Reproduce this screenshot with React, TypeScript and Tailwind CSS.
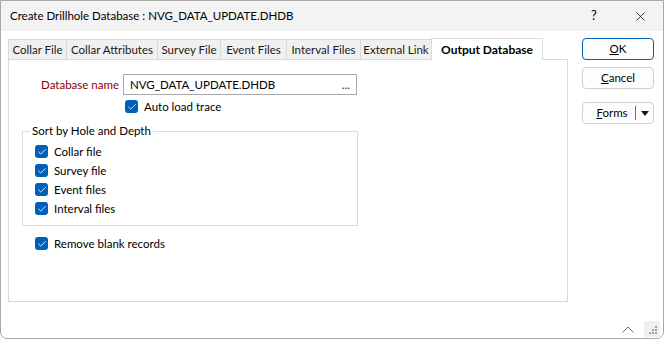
import { Check, X } from 'lucide-react'

const TABS = [
  { label: 'Collar File', w: 'w-[58px]' },
  { label: 'Collar Attributes', w: 'w-[91px]' },
  { label: 'Survey File', w: 'w-[63px]' },
  { label: 'Event Files', w: 'w-[66px]' },
  { label: 'Interval Files', w: 'w-[74px]' },
  { label: 'External Link', w: 'w-[71px]' },
]

const SORT_ITEMS = ['Collar file', 'Survey file', 'Event files', 'Interval files']

function CheckBox({ label }: { label: string }) {
  return (
    <label className="flex items-center gap-[6px] h-[19px] whitespace-nowrap">
      <span className="w-[13px] h-[13px] rounded-[3px] bg-[#005fb8] flex items-center justify-center">
        <Check size={10} strokeWidth={2} className="text-white" />
      </span>
      <span>{label}</span>
    </label>
  )
}

function Button({ children, primary }: { children: React.ReactNode; primary?: boolean }) {
  return (
    <button
      className={
        primary
          ? 'w-[72px] h-[22px] rounded-[4px] border border-[#005fb8] bg-[#fdfdfd] flex items-center justify-center'
          : 'w-[72px] h-[22px] rounded-[4px] border border-[#d0d0d0] bg-[#fdfdfd] flex items-center justify-center'
      }
    >
      {children}
    </button>
  )
}

export default function App() {
  return (
    <div
      className="w-[664px] h-[339px] bg-white text-[11.5px] text-black border border-[#a8a8a8] rounded-b-[7px] flex flex-col overflow-hidden select-none"
      style={{ fontFamily: 'Lato, "Noto Sans", sans-serif' }}
    >
      {/* title bar */}
      <div className="h-[30px] shrink-0 bg-[#f3f3f3] flex items-center pl-[9px]">
        <span className="flex-1 whitespace-nowrap">Create Drillhole Database : NVG_DATA_UPDATE.DHDB</span>
        <span className="w-[46px] text-center text-[13px]">?</span>
        <span className="w-[46px] flex justify-center">
          <X size={15} strokeWidth={1.2} />
        </span>
      </div>

      <div className="flex flex-1 pt-[6px]">
        {/* tabs + page */}
        <div className="pl-[7px] w-[567px] shrink-0 flex flex-col">
          <div className="flex items-end h-[22px]">
            {TABS.map((t) => (
              <div
                key={t.label}
                className={`${t.w} shrink-0 h-[20px] flex items-center justify-center whitespace-nowrap bg-[#f0f0f0] border-t border-l border-[#d9d9d9] text-[#1a1a1a]`}
              >
                {t.label}
              </div>
            ))}
            <div className="w-[112px] shrink-0 h-[22px] flex items-center justify-center whitespace-nowrap bg-white border-t border-x border-[#d9d9d9] font-bold text-[12px] -mb-px relative z-10">
              Output Database
            </div>
          </div>
          <div className="h-[243px] border border-[#d9d9d9] bg-white pt-[14px]">
            <div className="flex items-center">
              <span className="w-[114px] text-right text-[#8b0000] pr-[4px] whitespace-nowrap">Database name</span>
              <div className="w-[234px] h-[21px] border border-[#a8a8a8] flex items-center pl-[6px] pr-[6px]">
                <span className="flex-1">NVG_DATA_UPDATE.DHDB</span>
                <span className="text-[#1a1a6a]">...</span>
              </div>
            </div>
            <div className="pl-[116px] mt-[2px]">
              <CheckBox label="Auto load trace" />
            </div>

            <fieldset className="ml-[13px] mt-[8px] w-[336px] h-[102px] border border-[#dcdcdc] pl-[12px] pr-2 pt-[4px]">
              <legend className="px-[2px] -ml-[5px] leading-[14px]">Sort by Hole and Depth</legend>
              <div className="flex flex-col">
                {SORT_ITEMS.map((s) => (
                  <CheckBox key={s} label={s} />
                ))}
              </div>
            </fieldset>

            <div className="pl-[26px] mt-[8px]">
              <CheckBox label="Remove blank records" />
            </div>
          </div>
        </div>

        {/* buttons */}
        <div className="pl-[14px] pt-[1px] flex flex-col gap-[7px]">
          <Button primary>
            <span className="underline">O</span>K
          </Button>
          <Button>
            <span className="underline">C</span>ancel
          </Button>
          <div className="mt-[6px] w-[72px] h-[22px] rounded-[4px] border border-[#d0d0d0] bg-[#fdfdfd] flex items-center">
            <span className="flex-1 text-center pl-[6px]">
              <span className="underline">F</span>orms
            </span>
            <span className="w-px h-[14px] bg-[#707070]" />
            <span className="w-[17px] flex justify-center">
              <svg width="8" height="5" viewBox="0 0 8 5">
                <path d="M0 0h8L4 5z" fill="#1a1a1a" />
              </svg>
            </span>
          </div>
        </div>
      </div>

      {/* status strip */}
      <div className="h-[18px] shrink-0 flex items-center justify-end pr-[3px] gap-[10px]">
        <svg width="12" height="7" viewBox="0 0 12 7">
          <path d="M0.5 6.5L6 1l5.5 5.5" fill="none" stroke="#707070" strokeWidth="1" />
        </svg>
        <div className="w-[16px] h-[16px] bg-[#f0f0f0] relative">
          <svg width="16" height="16" viewBox="0 0 16 16" className="absolute inset-0">
            <g fill="#a0a0a0">
              <rect x="11" y="5" width="2" height="2" />
              <rect x="8" y="8" width="2" height="2" />
              <rect x="11" y="8" width="2" height="2" />
              <rect x="5" y="11" width="2" height="2" />
              <rect x="8" y="11" width="2" height="2" />
              <rect x="11" y="11" width="2" height="2" />
            </g>
          </svg>
        </div>
      </div>
    </div>
  )
}
